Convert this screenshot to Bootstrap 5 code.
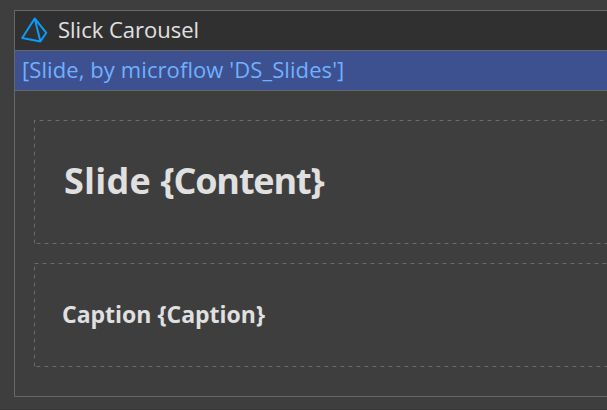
<!DOCTYPE html>
<html lang="en">
<head>
<meta charset="utf-8">
<meta name="viewport" content="width=device-width, initial-scale=1">
<title>Slick Carousel</title>
<link href="https://cdn.jsdelivr.net/npm/bootstrap@5.3.0/dist/css/bootstrap.min.css" rel="stylesheet">
<style>
body { background: #3e3e3e; color: #e0e0e0; font-family: "Open Sans", "Noto Sans", sans-serif; height: 410px; }
.editor { height: 410px; padding: 10px 0 13px 14px; border-bottom: 1px solid #383537; }
.widget { border: 1px solid #676767; border-right: 0; height: 387px; }
.bar { height: 40px; border-bottom: 1px solid #676767; white-space: nowrap; }
.title-bar { background: #303030; padding-left: 5px; }
.source-bar { background: #3d5190; color: #70b0ff; padding-left: 7px; }
.label-text { font-size: 22px; line-height: 36px; }
.title-text { padding: 0 0 3px 8px; }
.source-text { letter-spacing: .09px; }
.slots { padding: 29px 0 0 19px; gap: 19px; }
.slot {
  --dash: #505050 0 1px, #6b6b6b 1px 4px, #505050 4px 5px, transparent 5px 8px;
  background:
    repeating-linear-gradient(90deg, var(--dash)) var(--tx) 0 / 800px 1px no-repeat,
    repeating-linear-gradient(90deg, var(--dash)) var(--bx) 100% / 800px 1px no-repeat,
    repeating-linear-gradient(180deg, var(--dash)) 0 var(--ly) / 1px 400px no-repeat;
}
.slide-slot { height: 124px; padding: 0 0 3px 30px; --tx: -3px; --bx: -6px; --ly: -1px; }
.caption-slot { height: 104px; padding: 0 0 1px 28px; --tx: 0px; --bx: -6px; --ly: -5px; }
.slide-text { font-size: 36px; line-height: 1; font-weight: 700; white-space: nowrap; letter-spacing: .2px; }
.slide-param { letter-spacing: -1.15px; }
.caption-text { font-size: 23px; line-height: 1; font-weight: 700; white-space: nowrap; }
</style>
<script src="https://cdn.jsdelivr.net/npm/bootstrap@5.3.0/dist/js/bootstrap.bundle.min.js"></script>
</head>
<body class="overflow-hidden">
<main class="editor">
  <section class="widget d-flex flex-column">
    <header class="bar title-bar d-flex align-items-center">
      <svg class="flex-shrink-0" width="30" height="30" viewBox="0 0 30 30" fill="none" stroke="#0a9cf8" stroke-width="2" stroke-linejoin="round" aria-hidden="true"><path d="M14.7 2.5 2.2 22 20.4 25.4 26.3 16.8ZL20.4 25.4"/></svg>
      <span class="label-text title-text">Slick Carousel</span>
    </header>
    <div class="bar source-bar"><span class="label-text source-text">[Slide, by microflow 'DS_Slides']</span></div>
    <div class="slots d-flex flex-column">
      <div class="slot slide-slot d-flex align-items-center"><h1 class="slide-text m-0">Slide <span class="slide-param">{Content}</span></h1></div>
      <div class="slot caption-slot d-flex align-items-center"><h2 class="caption-text m-0">Caption {Caption}</h2></div>
    </div>
  </section>
</main>
</body>
</html>
